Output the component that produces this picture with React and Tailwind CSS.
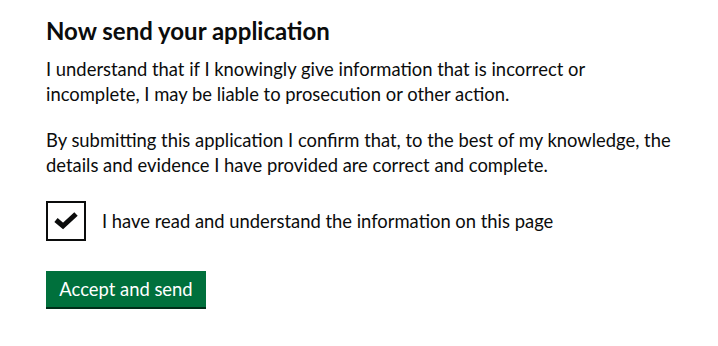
export default function App() {
  return (
    <div className="min-h-[346px] bg-white pl-[46px] pt-[16px] text-[#0b0c0c] font-['Lato','Liberation_Sans',Arial,sans-serif] whitespace-nowrap">
      <h1 className="text-[24px] leading-[30px] font-bold mb-[11px]">Now send your application</h1>
      <p className="text-[18.4px] leading-[25px] mb-[21px]">
        I understand that if I knowingly give information that is incorrect or
        <br />
        incomplete, I may be liable to prosecution or other action.
      </p>
      <p className="text-[18.4px] leading-[25px] mb-[23px]">
        By submitting this application I confirm that, to the best of my knowledge, the
        <br />
        details and evidence I have provided are correct and complete.
      </p>
      <label className="flex items-center gap-[16px] mb-[30px]">
        <span className="w-[40px] h-[40px] border-2 border-[#0b0c0c] flex items-center justify-center">
          <svg width="24" height="18" viewBox="0 0 24 18">
            <path d="M2 8 L9 14 L22 2" fill="none" stroke="#0b0c0c" strokeWidth="5" />
          </svg>
        </span>
        <span className="text-[18.4px] leading-[25px]">I have read and understand the information on this page</span>
      </label>
      <button className="h-[36px] w-[160px] bg-[#00703c] text-white text-[18.4px] leading-[25px] shadow-[0_2px_0_#002d18]">
        Accept and send
      </button>
    </div>
  );
}
